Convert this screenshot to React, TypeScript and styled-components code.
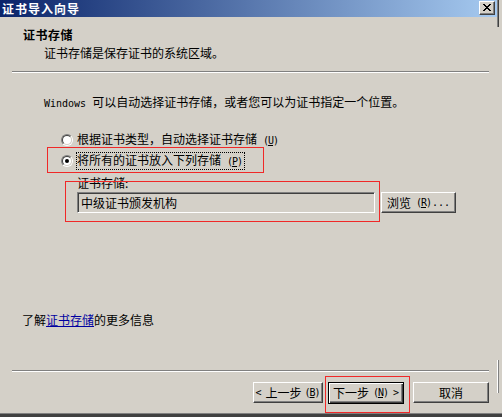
import React from "react";
import styled, { createGlobalStyle } from "styled-components";

const Global = createGlobalStyle`
  html, body { margin: 0; padding: 0; background: #d4d0c8; }
  body {
    font-family: "Noto Sans CJK SC", "Noto Sans", sans-serif;
    font-size: 12px;
    color: #000;
  }
`;

const Page = styled.div`
  position: relative;
  width: 502px;
  height: 417px;
  overflow: hidden;
  background: #d4d0c8;
  display: flex;
  flex-direction: column;
`;

const MainRow = styled.div`
  display: flex;
  height: 413px;
`;

const Window = styled.div`
  width: 497px;
  display: flex;
  flex-direction: column;
`;

const Strip = styled.div`
  flex: 1;
  display: flex;
  flex-direction: column;
`;

const StripMark = styled.div<{ $top: number; $h: number; $light?: boolean }>`
  margin-top: ${(p) => p.$top}px;
  height: ${(p) => p.$h}px;
  width: 2px;
  box-sizing: border-box;
  border-left: 1px solid ${(p) => (p.$light ? "#ffffff" : "#808080")};
  border-right: 1px solid ${(p) => (p.$light ? "#808080" : "#404040")};
`;

const BottomFrame = styled.div`
  height: 4px;
  box-sizing: border-box;
  border-top: 1px solid #808080;
  background: #404040;
`;

const TitleBar = styled.div`
  height: 17px;
  display: flex;
  align-items: flex-start;
  padding: 0 2px;
  background: linear-gradient(to right, #0a246a, #a6caf0);
`;

const TitleText = styled.span`
  color: #fff;
  font-weight: 700;
  letter-spacing: 1px;
  line-height: 17px;
`;

const CloseBtn = styled.div`
  margin-left: auto;
  margin-top: 1px;
  width: 16px;
  height: 14px;
  box-sizing: border-box;
  background: #d4d0c8;
  border: 1px solid;
  border-color: #fff #404040 #404040 #fff;
  box-shadow: inset -1px -1px #808080;
  display: flex;
  align-items: center;
  justify-content: center;
  padding-bottom: 1px;
`;

const Header = styled.div`
  padding: 11px 0 11px 23px;
`;

const HeaderTitle = styled.div`
  font-weight: 700;
  line-height: 14px;
  letter-spacing: 0.5px;
`;

const HeaderSub = styled.div`
  margin: 4px 0 0 21px;
  line-height: 14px;
`;

const Separator = styled.div`
  height: 2px;
  box-sizing: border-box;
  margin: 0 8px 0 12px;
  border-top: 1px solid #808080;
  border-bottom: 1px solid #fff;
`;

const Content = styled.div`
  flex: 1;
  display: flex;
  flex-direction: column;
  padding-left: 44px;
`;

const Intro = styled.div`
  margin-top: 22px;
  line-height: 14px;
`;

const Lat = styled.span<{ $gap?: number }>`
  font-family: "DejaVu Sans Mono", "Liberation Mono", monospace;
  font-size: 10px;
  white-space: pre;
  margin-left: ${(p) => p.$gap ?? 0}px;
`;

const Mn = styled.span<{ $gap?: number }>`
  font-family: "DejaVu Sans Mono", "Liberation Mono", monospace;
  font-size: 10px;
  letter-spacing: -1px;
  margin-left: ${(p) => p.$gap ?? 6}px;
  margin-right: 1px;
`;

const Key = styled.span`
  text-decoration: underline;
`;

const RadioGroup = styled.div`
  margin: 21px 0 0 17px;
  display: flex;
  flex-direction: column;
  gap: 5px;
`;

const RadioRow = styled.div`
  display: flex;
  align-items: center;
  height: 16px;
`;

const RadioOuter = styled.span`
  flex-shrink: 0;
  width: 12px;
  height: 12px;
  box-sizing: border-box;
  border-radius: 50%;
  border: 1px solid;
  border-color: #808080 #fff #fff #808080;
  display: flex;
  align-items: center;
  justify-content: center;
`;

const RadioInner = styled.span`
  width: 10px;
  height: 10px;
  box-sizing: border-box;
  border-radius: 50%;
  border: 1px solid;
  border-color: #404040 #d4d0c8 #d4d0c8 #404040;
  background: #fff;
  display: flex;
  align-items: center;
  justify-content: center;
`;

const Dot = styled.span`
  width: 4px;
  height: 4px;
  border-radius: 50%;
  background: #000;
`;

const RadioLabel = styled.span<{ $focus?: boolean }>`
  margin-left: 3px;
  padding-right: 1px;
  line-height: 14px;
  border: 1px dotted ${(p) => (p.$focus ? "#000" : "transparent")};
`;

const FieldLabel = styled.div`
  margin: 7px 0 0 33px;
  line-height: 14px;
`;

const FieldRow = styled.div`
  margin: 2px 0 0 33px;
  display: flex;
  gap: 6px;
  height: 21px;
`;

const TextBox = styled.div`
  width: 298px;
  height: 21px;
  box-sizing: border-box;
  border: 1px solid;
  border-color: #808080 #fff #fff #808080;
  box-shadow: inset 1px 1px #404040, inset -1px -1px #d4d0c8;
  background: #d4d0c8;
  padding-left: 3px;
  display: flex;
  align-items: center;
  line-height: 14px;
`;

const Button = styled.div<{ $w: number; $default?: boolean }>`
  width: ${(p) => p.$w}px;
  height: ${(p) => (p.$default ? 22 : 21)}px;
  box-sizing: border-box;
  background: #d4d0c8;
  border: 1px solid;
  border-color: ${(p) => (p.$default ? "#000" : "#fff #404040 #404040 #fff")};
  box-shadow: ${(p) =>
    p.$default
      ? "inset 1px 1px #fff, inset -1px -1px #404040, inset -2px -2px #808080"
      : "inset -1px -1px #808080"};
  display: flex;
  align-items: center;
  justify-content: center;
  line-height: 14px;
  white-space: nowrap;
`;

const MoreInfo = styled.div`
  margin: auto 0 43px -22px;
  line-height: 14px;
`;

const Link = styled.span`
  color: #0000a0;
  text-decoration: underline;
`;

const ButtonRow = styled.div`
  margin: 10px 8px 9px 0;
  display: flex;
  justify-content: flex-end;
  align-items: flex-start;
  height: 22px;
`;

const NavGap = styled.div<{ $w: number }>`
  width: ${(p) => p.$w}px;
`;

const Annotation = styled.div<{ $x: number; $y: number; $w: number; $h: number }>`
  position: absolute;
  left: ${(p) => p.$x}px;
  top: ${(p) => p.$y}px;
  width: ${(p) => p.$w}px;
  height: ${(p) => p.$h}px;
  box-sizing: border-box;
  border: 1px solid #f02828;
  pointer-events: none;
`;

function CloseGlyph() {
  return (
    <svg width="8" height="7" viewBox="0 0 8 7" shapeRendering="crispEdges">
      <path d="M0 0H2L8 7H6Z" fill="#000" />
      <path d="M6 0H8L2 7H0Z" fill="#000" />
    </svg>
  );
}

export default function App() {
  return (
    <Page>
      <Global />
      <MainRow>
        <Window>
          <TitleBar>
            <TitleText>证书导入向导</TitleText>
            <CloseBtn>
              <CloseGlyph />
            </CloseBtn>
          </TitleBar>
          <Header>
            <HeaderTitle>证书存储</HeaderTitle>
            <HeaderSub>证书存储是保存证书的系统区域。</HeaderSub>
          </Header>
          <Separator />
          <Content>
            <Intro>
              <Lat>Windows </Lat>可以自动选择证书存储，或者您可以为证书指定一个位置。
            </Intro>
            <RadioGroup>
              <RadioRow>
                <RadioOuter>
                  <RadioInner />
                </RadioOuter>
                <RadioLabel>
                  根据证书类型，自动选择证书存储
                  <Mn>
                    (<Key>U</Key>)
                  </Mn>
                </RadioLabel>
              </RadioRow>
              <RadioRow>
                <RadioOuter>
                  <RadioInner>
                    <Dot />
                  </RadioInner>
                </RadioOuter>
                <RadioLabel $focus>
                  将所有的证书放入下列存储
                  <Mn>
                    (<Key>P</Key>)
                  </Mn>
                </RadioLabel>
              </RadioRow>
            </RadioGroup>
            <FieldLabel>证书存储:</FieldLabel>
            <FieldRow>
              <TextBox>中级证书颁发机构</TextBox>
              <Button $w={75}>
                浏览
                <Mn $gap={5}>
                  (<Key>R</Key>)
                </Mn>
                <Lat>...</Lat>
              </Button>
            </FieldRow>
            <MoreInfo>
              了解<Link>证书存储</Link>的更多信息
            </MoreInfo>
          </Content>
          <Separator />
          <ButtonRow>
            <Button $w={70}>
              <Lat>{"<"}</Lat>
              <Lat $gap={4} />
              上一步
              <Mn $gap={3}>
                (<Key>B</Key>)
              </Mn>
            </Button>
            <NavGap $w={5} />
            <Button $w={76} $default>
              下一步
              <Mn $gap={4}>
                (<Key>N</Key>)
              </Mn>
              <Lat $gap={4}>{">"}</Lat>
            </Button>
            <NavGap $w={9} />
            <Button $w={76}>取消</Button>
          </ButtonRow>
        </Window>
        <Strip>
          <StripMark $top={0} $h={27} />
          <StripMark $top={333} $h={33} $light />
        </Strip>
      </MainRow>
      <BottomFrame />
      <Annotation $x={47} $y={147} $w={217} $h={26} />
      <Annotation $x={65} $y={181} $w={315} $h={41} />
      <Annotation $x={325} $y={376} $w={85} $h={37} />
    </Page>
  );
}
